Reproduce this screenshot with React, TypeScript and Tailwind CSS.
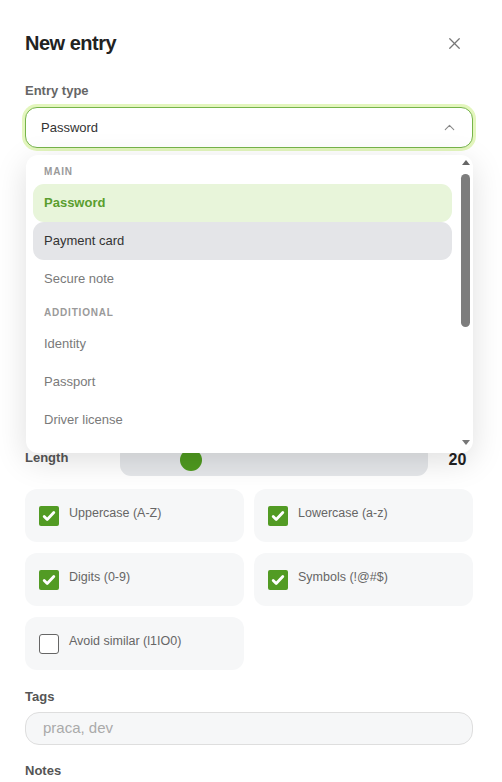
import React from "react";
import { X, ChevronUp } from "lucide-react";

const font = { fontFamily: '"Liberation Sans", Arial, sans-serif' };

function Check({ checked, label }: { checked: boolean; label: string }) {
  return (
    <div className="flex items-start gap-[10px] rounded-[12px] bg-[#f6f7f8] pl-[14px] pr-3 pt-[14px] pb-[16px]">
      {checked ? (
        <div className="mt-[3px] flex h-[20px] w-[20px] shrink-0 items-center justify-center rounded-[2px] bg-[#529b24]">
          <svg width="16" height="16" viewBox="0 0 16 16" fill="none">
            <path d="M3.2 8.4l3 3L12.8 4.6" stroke="white" strokeWidth="2.8" strokeLinecap="round" strokeLinejoin="round" />
          </svg>
        </div>
      ) : (
        <div className="mt-[3px] h-[20px] w-[20px] shrink-0 rounded-[3px] border border-[#666] bg-white" />
      )}
      <span className="text-[12.5px] leading-5 text-[#666]">{label}</span>
    </div>
  );
}

function Item({ label, kind }: { label: string; kind?: "selected" | "hover" }) {
  const cls =
    kind === "selected"
      ? "bg-[#e8f5da] font-bold text-[#5a9e2e]"
      : kind === "hover"
      ? "bg-[#e4e5e8] text-[#333]"
      : "text-[#7a7a7a]";
  return (
    <div className={`flex h-[38px] shrink-0 items-center rounded-[11px] px-[11px] text-[13px] ${cls}`}>{label}</div>
  );
}

function Header({ label, extra }: { label: string; extra?: boolean }) {
  return (
    <div
      className={`shrink-0 px-[11px] ${extra ? "pt-[9px]" : "pt-[6px]"} pb-[6px] text-[10px] font-bold leading-[12px] tracking-[0.08em] text-[#9a9a9a]`}
    >
      {label}
    </div>
  );
}

export default function App() {
  return (
    <div className="min-h-[782px] w-[502px] overflow-hidden bg-white" style={font}>
      <div className="flex flex-col pl-[25px] pr-[29px] pt-[29px]">
        <div className="flex h-[28px] items-center justify-between">
          <h1 className="text-xl font-bold tracking-tight text-[#222]">New entry</h1>
          <X size={19} strokeWidth={1.6} className="mr-[9px] text-[#777]" />
        </div>

        <label className="mt-[26px] text-[13px] font-bold leading-4 text-[#666]">Entry type</label>
        <div className="relative mt-[8px]">
          <div className="flex h-[41px] items-center justify-between rounded-[12px] border-[1.5px] border-[#76b44a] bg-white pl-[15px] pr-[14px] shadow-[0_0_0_3px_#e3f6bd]">
            <span className="text-[13px] text-[#333]">Password</span>
            <ChevronUp size={17} strokeWidth={1.5} className="text-[#888]" />
          </div>

          <div className="absolute left-px right-0 top-[48px] z-10 flex h-[298px] overflow-hidden rounded-[12px] bg-white shadow-[0_8px_32px_rgba(0,0,0,0.13)]">
            <div className="flex flex-1 flex-col pl-[7px] pr-[6px] pt-[5px]">
              <Header label="MAIN" />
              <Item label="Password" kind="selected" />
              <Item label="Payment card" kind="hover" />
              <Item label="Secure note" />
              <Header label="ADDITIONAL" extra />
              <Item label="Identity" />
              <Item label="Passport" />
              <Item label="Driver license" />
              <Item label="Other" />
            </div>
            <div className="flex w-[15px] flex-col items-center pt-[5px] pb-[8px]">
              <div className="h-0 w-0 border-x-[4px] border-b-[5px] border-x-transparent border-b-[#666]" />
              <div className="mt-[9px] h-[153px] w-[9px] rounded-full bg-[#7d7d7d]" />
              <div className="flex-1" />
              <div className="h-0 w-0 border-x-[4px] border-t-[5px] border-x-transparent border-t-[#777]" />
            </div>
          </div>
        </div>

        <div className="h-[296px]" />

        <div className="flex h-[32px] items-center">
          <span className="w-[95px] -translate-y-[2px] text-[13px] font-bold text-[#555]">Length</span>
          <div className="flex h-[32px] w-[308px] items-center rounded-[11px] bg-[#e5e7ea] pl-[60px]">
            <div className="h-[22px] w-[22px] rounded-full bg-[#4f9a1f]" />
          </div>
          <span className="flex-1 pl-[14px] text-center text-base font-bold text-[#222]">20</span>
        </div>

        <div className="mt-[13px] grid grid-cols-2 gap-x-[10px] gap-y-[11px]">
          <Check checked label="Uppercase (A-Z)" />
          <Check checked label="Lowercase (a-z)" />
          <Check checked label="Digits (0-9)" />
          <Check checked label="Symbols (!@#$)" />
          <Check checked={false} label="Avoid similar (l1IO0)" />
        </div>

        <label className="mt-[19px] text-[13px] font-bold leading-4 text-[#555]">Tags</label>
        <div className="mt-[7px] flex h-[33px] items-center rounded-[14px] border-[1.5px] border-[#dedede] bg-[#f6f7f8] pl-[17px]">
          <span className="text-[15px] text-[#aaa]">praca, dev</span>
        </div>

        <label className="mt-[18px] text-[13px] font-bold leading-4 text-[#555]">Notes</label>
        <div className="mt-[7px] h-[80px] rounded-[14px] border-[1.5px] border-[#dedede] bg-[#f6f7f8]" />
      </div>
    </div>
  );
}
